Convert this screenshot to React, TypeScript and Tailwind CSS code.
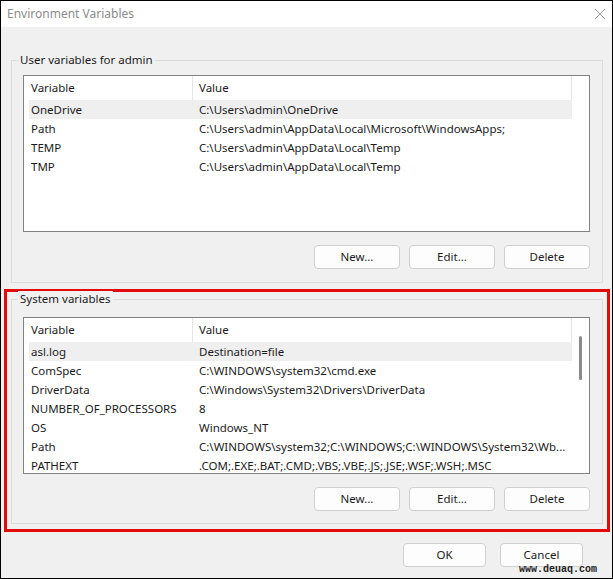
import React from 'react';

type Row = [string, string];

const userVars: Row[] = [
  ['OneDrive', 'C:\\Users\\admin\\OneDrive'],
  ['Path', 'C:\\Users\\admin\\AppData\\Local\\Microsoft\\WindowsApps;'],
  ['TEMP', 'C:\\Users\\admin\\AppData\\Local\\Temp'],
  ['TMP', 'C:\\Users\\admin\\AppData\\Local\\Temp'],
];

const systemVars: Row[] = [
  ['asl.log', 'Destination=file'],
  ['ComSpec', 'C:\\WINDOWS\\system32\\cmd.exe'],
  ['DriverData', 'C:\\Windows\\System32\\Drivers\\DriverData'],
  ['NUMBER_OF_PROCESSORS', '8'],
  ['OS', 'Windows_NT'],
  ['Path', 'C:\\WINDOWS\\system32;C:\\WINDOWS;C:\\WINDOWS\\System32\\Wb...'],
  ['PATHEXT', '.COM;.EXE;.BAT;.CMD;.VBS;.VBE;.JS;.JSE;.WSF;.WSH;.MSC'],
];

const WinButton = ({ label, width }: { label: string; width: string }) => (
  <button
    type="button"
    className={`${width} h-[24px] rounded-[4px] border border-[#d0d0d0] bg-[#fdfdfd] text-[11.5px] text-[#1b1b1b]`}
  >
    {label}
  </button>
);

const VarList = ({ rows, scroll }: { rows: Row[]; scroll?: boolean }) => (
  <div className="flex h-[157px] w-[567px] overflow-hidden border border-[#828282] bg-white">
    <div className="min-w-0 flex-1 overflow-hidden pl-[5px]">
      <div className="flex h-[24px] items-center">
        <div className="w-[163px] shrink-0 pl-[2px]">Variable</div>
        <div className="h-full flex-1 border-x border-[#e5e5e5] pl-[6px] leading-[24px]">
          Value
        </div>
      </div>
      {rows.map(([name, value], i) => (
        <div
          key={name + i}
          className={`flex h-[19px] items-center whitespace-nowrap pt-[1px] ${i === 0 ? 'bg-[#efefef]' : ''}`}
        >
          <div className="w-[163px] shrink-0 pl-[2px]">{name}</div>
          <div className="flex-1 pl-[7px]">{value}</div>
        </div>
      ))}
    </div>
    <div className="flex w-[17px] shrink-0 justify-center pt-[18px]">
      {scroll && <div className="h-[44px] w-[3px] rounded-full bg-[#8a8a8a]" />}
    </div>
  </div>
);

const GroupBox = ({
  title,
  className,
  children,
}: {
  title: string;
  className: string;
  children: React.ReactNode;
}) => (
  <div className={`relative w-[592px] border border-[#dcdcdc] pl-[11px] pr-[12px] ${className}`}>
    <span className="absolute left-[6px] top-[-9px] bg-[#f0f0f0] px-[2px] leading-[16px]">
      {title}
    </span>
    {children}
  </div>
);

const ButtonRow = () => (
  <div className="flex justify-end gap-[9px]">
    <WinButton label="New..." width="w-[86px]" />
    <WinButton label="Edit..." width="w-[86px]" />
    <WinButton label="Delete" width="w-[86px]" />
  </div>
);

export default function App() {
  return (
    <div
      className="relative h-[579px] w-[613px] border border-black bg-[#f0f0f0] text-[11.5px] text-[#1b1b1b]"
      style={{ fontFamily: '"Noto Sans", "Open Sans", sans-serif' }}
    >
      {/* title bar */}
      <div className="flex h-[26px] items-center justify-between bg-white pb-[1px] pl-[6px] pr-[6px]">
        <span className="text-[12px] text-[#8c8c8c]">Environment Variables</span>
        <svg width="12" height="12" viewBox="0 0 12 12">
          <path d="M1 1 L11 11 M11 1 L1 11" stroke="#9a9a9a" strokeWidth="1" />
        </svg>
      </div>

      <GroupBox title="User variables for admin" className="ml-[10px] mt-[33px] pt-[14px] pb-[13px]">
        <VarList rows={userVars} />
        <div className="mt-[13px]">
          <ButtonRow />
        </div>
      </GroupBox>

      {/* highlighted system section */}
      <div className="ml-[3px] mt-[6px] w-[606px] border-[3px] border-[#e50a0a] pb-[5px] pt-[7px]">
        <GroupBox title="System variables" className="ml-[4px] pt-[17px] pb-[12px]">
          <VarList rows={systemVars} scroll />
          <div className="mt-[13px]">
            <ButtonRow />
          </div>
        </GroupBox>
      </div>

      <div className="mr-[29px] mt-[11px] flex justify-end gap-[14px]">
        <WinButton label="OK" width="w-[83px]" />
        <WinButton label="Cancel" width="w-[83px]" />
      </div>

      <span
        className="absolute bottom-[2px] right-[15px] text-[10px] font-bold leading-[12px] text-[#222]"
        style={{ fontFamily: '"Liberation Mono", monospace' }}
      >
        www.deuaq.com
      </span>
    </div>
  );
}
